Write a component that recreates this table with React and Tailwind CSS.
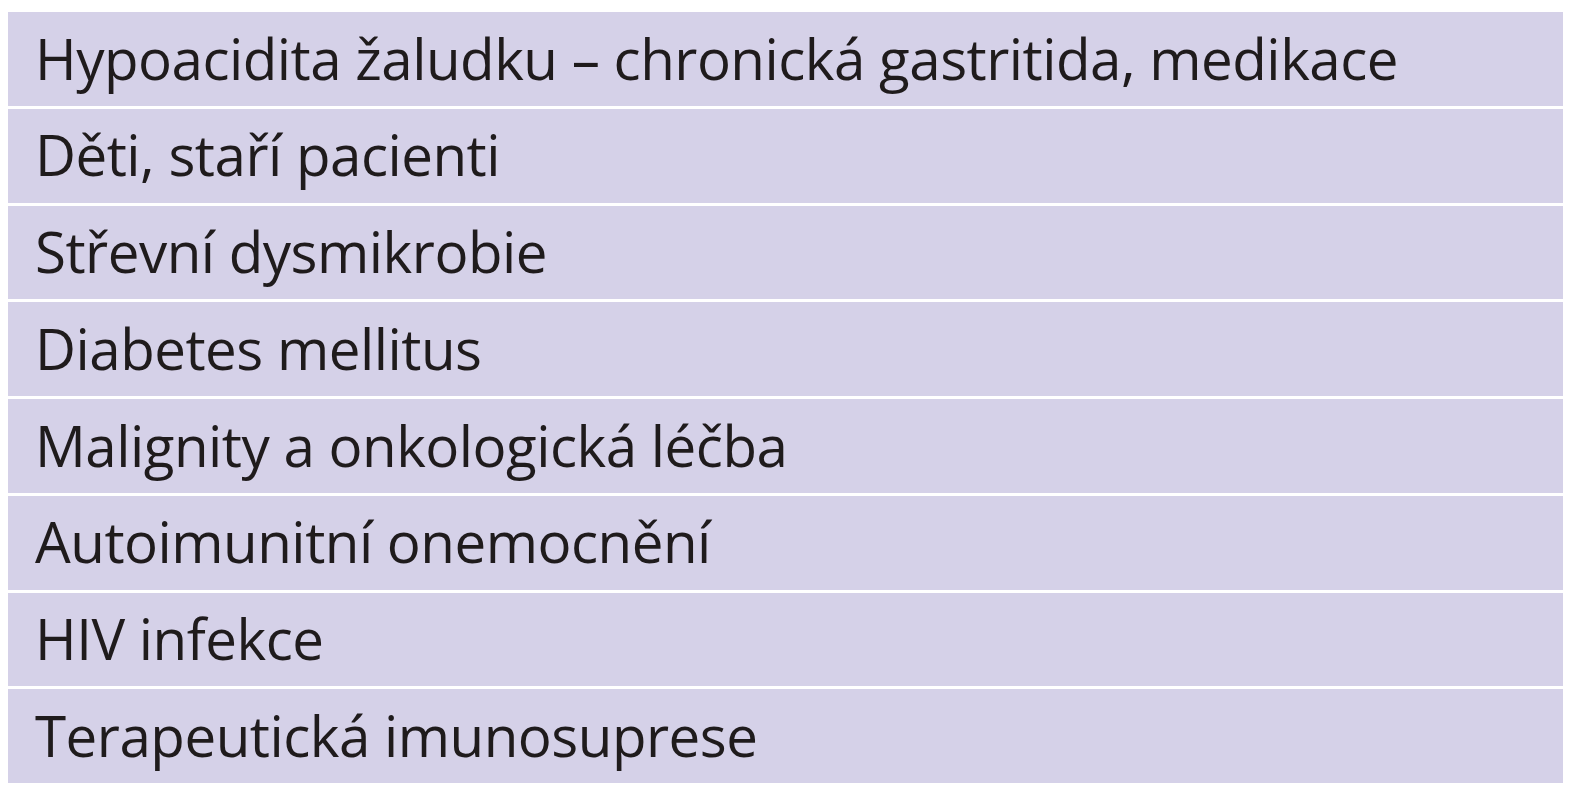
export default function App() {
  const rows = [
    "Hypoacidita žaludku – chronická gastritida, medikace",
    "Děti, staří pacienti",
    "Střevní dysmikrobie",
    "Diabetes mellitus",
    "Malignity a onkologická léčba",
    "Autoimunitní onemocnění",
    "HIV infekce",
    "Terapeutická imunosuprese",
  ];
  return (
    <div className="w-[1573px] h-[800px] bg-white pt-[12px] pl-[8px]" style={{ fontFamily: '"Open Sans", "Noto Sans", sans-serif' }}>
      <div className="w-[1555px] flex flex-col gap-[3px]">
        {rows.map((r) => (
          <div key={r} className="h-[93.75px] bg-[#d5d1e8] flex items-center pl-[27px] text-[56.5px] text-[#1f1b1c] leading-none tracking-[-0.5px]">
            {r}
          </div>
        ))}
      </div>
    </div>
  );
}
